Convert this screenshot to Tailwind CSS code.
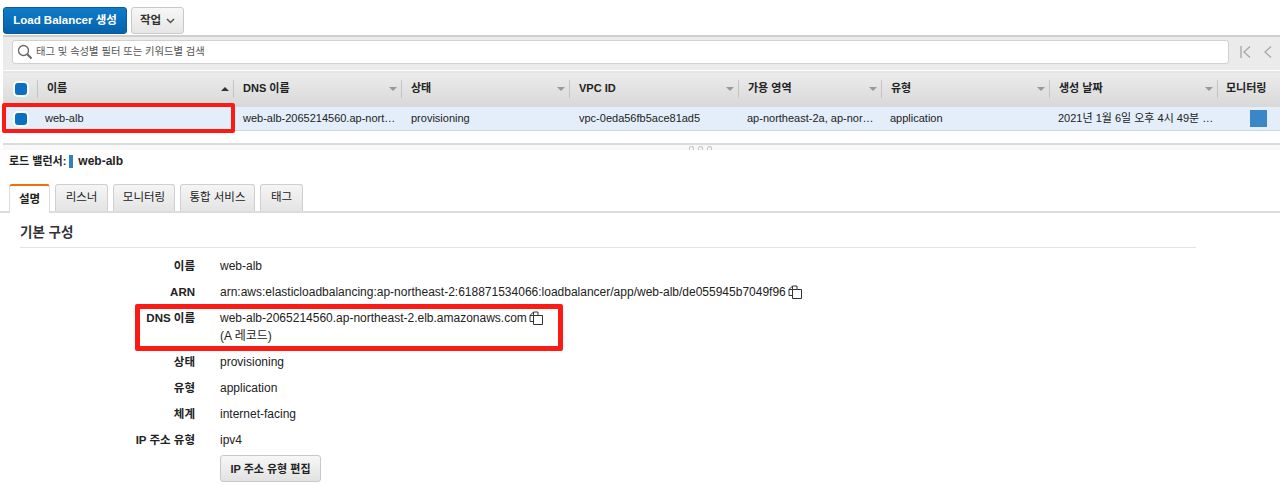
<!DOCTYPE html>
<html lang="ko">
<head>
  <meta charset="UTF-8">
  <title>Load Balancers</title>
  <script src="https://cdn.jsdelivr.net/npm/@tailwindcss/browser@4"></script>
</head>
<body class="bg-white text-[#222] text-[11px] font-['Liberation_Sans','Noto_Sans_CJK_KR',sans-serif]">
  <div class="relative h-[485px] w-[1280px] overflow-hidden">

    <!-- toolbar -->
    <div class="flex gap-[4px] pl-[3px] pt-[7px] h-[35px]">
      <button class="h-[27px] w-[124px] rounded-[3px] border border-[#0b5aa0] bg-gradient-to-b from-[#0f7cc9] to-[#0562ac] text-white font-bold text-[11.5px]">Load Balancer 생성</button>
      <button class="h-[27px] w-[53px] rounded-[3px] border border-[#c8c8c8] bg-gradient-to-b from-[#f7f7f7] to-[#e6e6e6] font-bold text-[#333] flex items-center justify-center gap-[5px]">
        <span class="text-[11.5px]">작업</span>
        <svg width="9" height="6" viewBox="0 0 9 6" fill="none" stroke="#555" stroke-width="1.5"><path d="M1 1l3.5 3.5L8 1"/></svg>
      </button>
    </div>

    <!-- search strip -->
    <div class="ml-[3px] h-[35px] border-t-2 border-[#cfcfcf] bg-[#ebebeb] flex items-start pl-[9px] pt-[3px]">
      <div class="h-[24px] w-[1217px] rounded-[3px] bg-white border border-[#d0d0d0] flex items-center pl-[4px] gap-[3px]">
        <svg width="16" height="16" viewBox="0 0 16 16" fill="none" stroke="#666" stroke-width="1.3"><circle cx="6.5" cy="6.5" r="5"/><path d="M10.3 10.3l4.2 4.2" stroke-width="2"/></svg>
        <span class="text-[10.3px] text-[#555]">태그 및 속성별 필터 또는 키워드별 검색</span>
      </div>
      <div class="flex items-center gap-[13px] pl-[11px] pt-[6px]">
        <svg width="11" height="12" viewBox="0 0 11 12" fill="none" stroke="#aaa" stroke-width="1.4"><path d="M1 0v12M10 .5L4 6l6 5.5"/></svg>
        <svg width="8" height="12" viewBox="0 0 8 12" fill="none" stroke="#aaa" stroke-width="1.4"><path d="M7 .5L1 6l6 5.5"/></svg>
      </div>
    </div>

    <!-- table header -->
    <div class="ml-[3px] mt-px h-[36px] pb-[3px] border-t-2 border-[#e4e4e4] bg-gradient-to-b from-[#ececec] to-[#d8d8d8] grid grid-cols-[34px_196px_168px_168px_169px_143px_168px_168px_1fr] items-center font-bold text-[#222]">
      <div class="flex justify-center pl-[1px]"><span class="block size-[12px] rounded-[3px] bg-[#0b6fc2] ring-2 ring-white/80"></span></div>
      <div class="flex items-center justify-between h-[18px] border-l border-[#c4c4c4] pl-[9px] pr-[4px]"><span>이름</span><span class="size-0 border-x-[4px] border-b-[4px] border-x-transparent border-b-[#333]"></span></div>
      <div class="flex items-center justify-between h-[18px] border-l border-[#c4c4c4] pl-[9px] pr-[4px]"><span>DNS 이름</span><span class="size-0 border-x-[4px] border-t-[4px] border-x-transparent border-t-[#999]"></span></div>
      <div class="flex items-center justify-between h-[18px] border-l border-[#c4c4c4] pl-[9px] pr-[4px]"><span>상태</span><span class="size-0 border-x-[4px] border-t-[4px] border-x-transparent border-t-[#999]"></span></div>
      <div class="flex items-center justify-between h-[18px] border-l border-[#c4c4c4] pl-[9px] pr-[4px]"><span>VPC ID</span><span class="size-0 border-x-[4px] border-t-[4px] border-x-transparent border-t-[#999]"></span></div>
      <div class="flex items-center justify-between h-[18px] border-l border-[#c4c4c4] pl-[9px] pr-[4px]"><span>가용 영역</span><span class="size-0 border-x-[4px] border-t-[4px] border-x-transparent border-t-[#999]"></span></div>
      <div class="flex items-center justify-between h-[18px] border-l border-[#c4c4c4] pl-[9px] pr-[4px]"><span>유형</span><span class="size-0 border-x-[4px] border-t-[4px] border-x-transparent border-t-[#999]"></span></div>
      <div class="flex items-center justify-between h-[18px] border-l border-[#c4c4c4] pl-[9px] pr-[4px]"><span>생성 날짜</span><span class="size-0 border-x-[4px] border-t-[4px] border-x-transparent border-t-[#999]"></span></div>
      <div class="flex items-center h-[18px] border-l border-[#c4c4c4] pl-[8px]"><span>모니터링</span></div>
    </div>

    <!-- selected row -->
    <div class="ml-[3px] h-[24px] border-b border-[#ccd8e6] bg-[#e4eefa] grid grid-cols-[34px_196px_168px_168px_169px_143px_168px_168px_1fr] items-center">
      <div class="flex justify-center pl-[1px]"><span class="block size-[12px] rounded-[3px] bg-[#0b6fc2] ring-2 ring-white/80"></span></div>
      <div class="pl-[8px]">web-alb</div>
      <div class="pl-[10px]">web-alb-2065214560.ap-nort…</div>
      <div class="pl-[10px]">provisioning</div>
      <div class="pl-[10px]">vpc-0eda56fb5ace81ad5</div>
      <div class="pl-[9px]">ap-northeast-2a, ap-nor…</div>
      <div class="pl-[9px]">application</div>
      <div class="pl-[9px]">2021년 1월 6일 오후 4시 49분 …</div>
      <div class="pl-[33px]"><span class="block h-[17px] w-[17px] bg-[#3b86c6]"></span></div>
    </div>

    <!-- splitter -->
    <div class="ml-[3px] mt-[12px] h-[7px] border-t-2 border-[#dcdcdc] bg-[#f8f8f8] flex justify-center gap-[4px] pl-[118px]">
      <span class="mt-px h-[4px] w-[5px] rounded-t-full border border-b-0 border-[#c4c4c4]"></span>
      <span class="mt-px h-[4px] w-[5px] rounded-t-full border border-b-0 border-[#c4c4c4]"></span>
      <span class="mt-px h-[4px] w-[5px] rounded-t-full border border-b-0 border-[#c4c4c4]"></span>
    </div>

    <!-- detail title -->
    <div class="flex items-center h-[20px] pl-[9px] mt-px font-bold">
      <span>로드 밸런서:</span>
      <span class="ml-[3px] h-[13px] w-[4px] bg-[#2f80c4]"></span>
      <span class="ml-[5px] text-[12px]">web-alb</span>
    </div>

    <!-- tabs -->
    <div class="mt-[13px] h-[29px] border-b-2 border-[#dcdcdc] flex items-end gap-[5px] pl-[9px] text-[11.5px]">
      <div class="w-[41px] h-[29px] -mb-[2px] bg-white border-x border-[#dcdcdc] border-t-2 border-t-[#e8730c] rounded-t-[3px] flex items-center justify-center font-bold">설명</div>
      <div class="w-[53px] h-[27px] rounded-t-[3px] border border-b-0 border-[#cfcfcf] bg-gradient-to-b from-[#f5f5f5] to-[#e4e4e4] flex items-center justify-center">리스너</div>
      <div class="w-[62px] h-[27px] rounded-t-[3px] border border-b-0 border-[#cfcfcf] bg-gradient-to-b from-[#f5f5f5] to-[#e4e4e4] flex items-center justify-center">모니터링</div>
      <div class="w-[75px] h-[27px] rounded-t-[3px] border border-b-0 border-[#cfcfcf] bg-gradient-to-b from-[#f5f5f5] to-[#e4e4e4] flex items-center justify-center">통합 서비스</div>
      <div class="w-[43px] h-[27px] rounded-t-[3px] border border-b-0 border-[#cfcfcf] bg-gradient-to-b from-[#f5f5f5] to-[#e4e4e4] flex items-center justify-center">태그</div>
    </div>

    <!-- section -->
    <div class="ml-[20px] w-[1176px] h-[35px] border-b border-[#e2e2e2] flex items-center pt-[6px] text-[13.5px] font-bold text-[#333]">기본 구성</div>

    <!-- detail rows -->
    <div class="mt-[9px] grid grid-cols-[195px_1fr] gap-x-[25px] leading-[18px] text-[12px]">
      <div class="text-right font-bold text-[11.5px]">이름</div><div>web-alb</div>
      <div class="mt-[8px] text-right font-bold text-[11.5px]">ARN</div>
      <div class="mt-[8px] flex items-center gap-[2px]">arn:aws:elasticloadbalancing:ap-northeast-2:618871534066:loadbalancer/app/web-alb/de055945b7049f96
        <svg width="15" height="15" viewBox="0 0 15 15" fill="none" stroke="#333"><path d="M4.5 10.5H1V4.5L4.5 1H9V4.5M4.5 1V4.5H1M4.5 4.5H13.5V13.5H4.5Z"/></svg>
      </div>
      <div class="mt-[8px] text-right font-bold text-[11.5px]">DNS 이름</div>
      <div class="mt-[8px]">
        <div class="flex items-center gap-[2px]">web-alb-2065214560.ap-northeast-2.elb.amazonaws.com
          <svg width="15" height="15" viewBox="0 0 15 15" fill="none" stroke="#333"><path d="M4.5 10.5H1V4.5L4.5 1H9V4.5M4.5 1V4.5H1M4.5 4.5H13.5V13.5H4.5Z"/></svg>
        </div>
        <div>(A 레코드)</div>
      </div>
      <div class="mt-[8px] text-right font-bold text-[11.5px]">상태</div><div class="mt-[8px]">provisioning</div>
      <div class="mt-[8px] text-right font-bold text-[11.5px]">유형</div><div class="mt-[8px]">application</div>
      <div class="mt-[8px] text-right font-bold text-[11.5px]">체계</div><div class="mt-[8px]">internet-facing</div>
      <div class="mt-[8px] text-right font-bold text-[11.5px]">IP 주소 유형</div><div class="mt-[8px]">ipv4</div>
      <div></div>
      <div class="mt-[6px]"><button class="h-[27px] w-[101px] rounded-[3px] border border-[#c8c8c8] bg-gradient-to-b from-[#f7f7f7] to-[#e2e2e2] font-bold text-[11px]">IP 주소 유형 편집</button></div>
    </div>

    <!-- red highlight boxes -->
    <div class="absolute left-[2px] top-[103px] h-[30px] w-[233px] rounded-[2px] border-[4px] border-[#fb1a14]"></div>
    <div class="absolute left-[135px] top-[304px] h-[47px] w-[428px] rounded-[2px] border-[5px] border-[#fb1a14]"></div>
  </div>
</body>
</html>
